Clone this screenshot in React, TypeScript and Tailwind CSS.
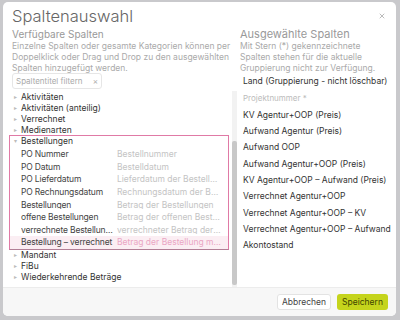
import { X } from 'lucide-react';

const groupsTop = ['Aktivitäten', 'Aktivitäten (anteilig)', 'Verrechnet', 'Medienarten'];
const groupsBottom = ['Mandant', 'FiBu', 'Wiederkehrende Beträge'];

const orderCols = [
    { name: 'PO Nummer', desc: 'Bestellnummer' },
    { name: 'PO Datum', desc: 'Bestelldatum' },
    { name: 'PO Lieferdatum', desc: 'Lieferdatum der Bestellung' },
    { name: 'PO Rechnungsdatum', desc: 'Rechnungsdatum der Bestellung' },
    { name: 'Bestellungen', desc: 'Betrag der Bestellungen' },
    { name: 'offene Bestellungen', desc: 'Betrag der offenen Bestellungen' },
    { name: 'verrechnete Bestellungen', desc: 'verrechneter Betrag der Bestellungen' },
];

const selected = [
    'KV Agentur+OOP (Preis)',
    'Aufwand Agentur (Preis)',
    'Aufwand OOP',
    'Aufwand Agentur+OOP (Preis)',
    'KV Agentur+OOP – Aufwand (Preis)',
    'Verrechnet Agentur+OOP',
    'Verrechnet Agentur+OOP – KV',
    'Verrechnet Agentur+OOP – Aufwand',
    'Akontostand',
];

function GroupRow({ label }: { label: string }) {
    return (
        <div className="h-[10.8px] flex items-center gap-[3px] pl-[5px] text-[8.5px] leading-none text-[#333]">
            <span className="text-[6px] text-[#bbb] w-[4px]">▸</span>
            <span>{label}</span>
        </div>
    );
}

export default function App() {
    return (
        <div className="w-[400px] h-[320px] bg-[#c9c9cc] overflow-hidden" style={{ fontFamily: 'Inter, "Open Sans", sans-serif' }}>
            <div className="ml-[3px] mt-[2px] w-[393px] h-[314px] bg-white rounded-[5px] flex flex-col overflow-hidden">
                {/* Header */}
                <div className="h-[24px] flex items-center justify-between pl-[9px] pr-[10px] pt-[4px]">
                    <h1 className="text-[16.5px] font-light text-[#666] leading-none">Spaltenauswahl</h1>
                    <X className="w-[8px] h-[8px] text-[#999]" strokeWidth={2} />
                </div>

                {/* Body */}
                <div className="flex h-[261px]">
                    {/* Available columns */}
                    <div className="w-[234px] flex flex-col">
                        <div className="pl-[9px]">
                            <h3 className="text-[10px] text-[#999] leading-[14px] mt-[1px]">Verfügbare Spalten</h3>
                            <p className="text-[8.5px] text-[#aaa] leading-[11px] pr-[4px]">
                                Einzelne Spalten oder gesamte Kategorien können per Doppelklick oder Drag und Drop zu den ausgewählten Spalten hinzugefügt werden.
                            </p>
                            <div className="-mt-[1px] w-[90px] h-[16px] border border-[#e6e6e6] rounded-[3px] flex items-center justify-between px-[3px] text-[8px] text-[#aaa]">
                                <span>Spaltentitel filtern</span>
                                <span className="text-[8px]">×</span>
                            </div>
                        </div>
                        <div className="flex flex-1 mt-[2px]">
                            <div className="flex-1 min-w-0 pl-[6px] pr-[3px] pt-[1px]">
                                {groupsTop.map((g) => (
                                    <GroupRow key={g} label={g} />
                                ))}
                                <div className="border border-[#e07aa6] border-b-[#b27f96]">
                                    <div className="h-[10px] flex items-center gap-[3px] pl-[4px] text-[8.5px] leading-none text-[#333]">
                                        <span className="text-[6px] text-[#bbb] w-[4px]">▾</span>
                                        <span>Bestellungen</span>
                                    </div>
                                    <div className="pt-[2px]">
                                        {orderCols.map((c) => (
                                            <div key={c.name} className="h-[12.6px] flex items-center pl-[11px] text-[8.5px] leading-none">
                                                <span className="w-[96px] shrink-0 truncate pr-[1px] text-[#444] tracking-[-0.15px]">{c.name}</span>
                                                <span className="min-w-0 truncate text-[#c4c4c4] pr-[6px]">{c.desc}</span>
                                            </div>
                                        ))}
                                        <div className="h-[12.6px] flex items-center pl-[11px] text-[8.5px] leading-none bg-[#fbeef3]">
                                            <span className="w-[96px] shrink-0 truncate pr-[1px] text-[#444] tracking-[-0.15px]">Bestellung – verrechnet</span>
                                            <span className="min-w-0 truncate text-[#eaa6c3] pr-[6px]">Betrag der Bestellung mit Verrechnung</span>
                                        </div>
                                    </div>
                                </div>
                                {groupsBottom.map((g) => (
                                    <GroupRow key={g} label={g} />
                                ))}
                            </div>
                            {/* scrollbar */}
                            <div className="w-[5px] bg-[#f2f2f2] flex flex-col">
                                <div className="h-[50px]" />
                                <div className="flex-1 mb-[2px] bg-[#c8c8c8] rounded-[2px]" />
                            </div>
                        </div>
                    </div>

                    {/* Selected columns */}
                    <div className="flex-1 flex flex-col pl-[3px]">
                        <h3 className="text-[11px] text-[#999] leading-[14px] mt-[1px]">Ausgewählte Spalten</h3>
                        <p className="w-[142px] text-[8.5px] text-[#aaa] leading-[11px]">
                            Mit Stern (*) gekennzeichnete Spalten stehen für die aktuelle Gruppierung nicht zur Verfügung.
                        </p>
                        <div className="pl-[3px] text-[8.5px] leading-none text-[#333]">
                            <div className="h-[14px] flex items-center whitespace-nowrap">Land (Gruppierung - nicht löschbar)</div>
                            <div className="h-[19px] flex items-center text-[#bbb] text-[8px]">Projektnummer *</div>
                            {selected.map((s) => (
                                <div key={s} className="h-[16.3px] flex items-center whitespace-nowrap">{s}</div>
                            ))}
                        </div>
                    </div>
                </div>

                {/* Footer */}
                <div className="flex-1 bg-[#f7f7f7] border-t border-[#ececec] flex items-center justify-end gap-[6px] pr-[8px]">
                    <button className="w-[54px] h-[16px] bg-white border border-[#e3e3e3] rounded-[3px] text-[8.5px] text-[#444]">
                        Abbrechen
                    </button>
                    <button className="w-[51px] h-[16px] bg-[#c5d41c] rounded-[3px] text-[8.5px] text-[#3f4500]">
                        Speichern
                    </button>
                </div>
            </div>
        </div>
    );
}
